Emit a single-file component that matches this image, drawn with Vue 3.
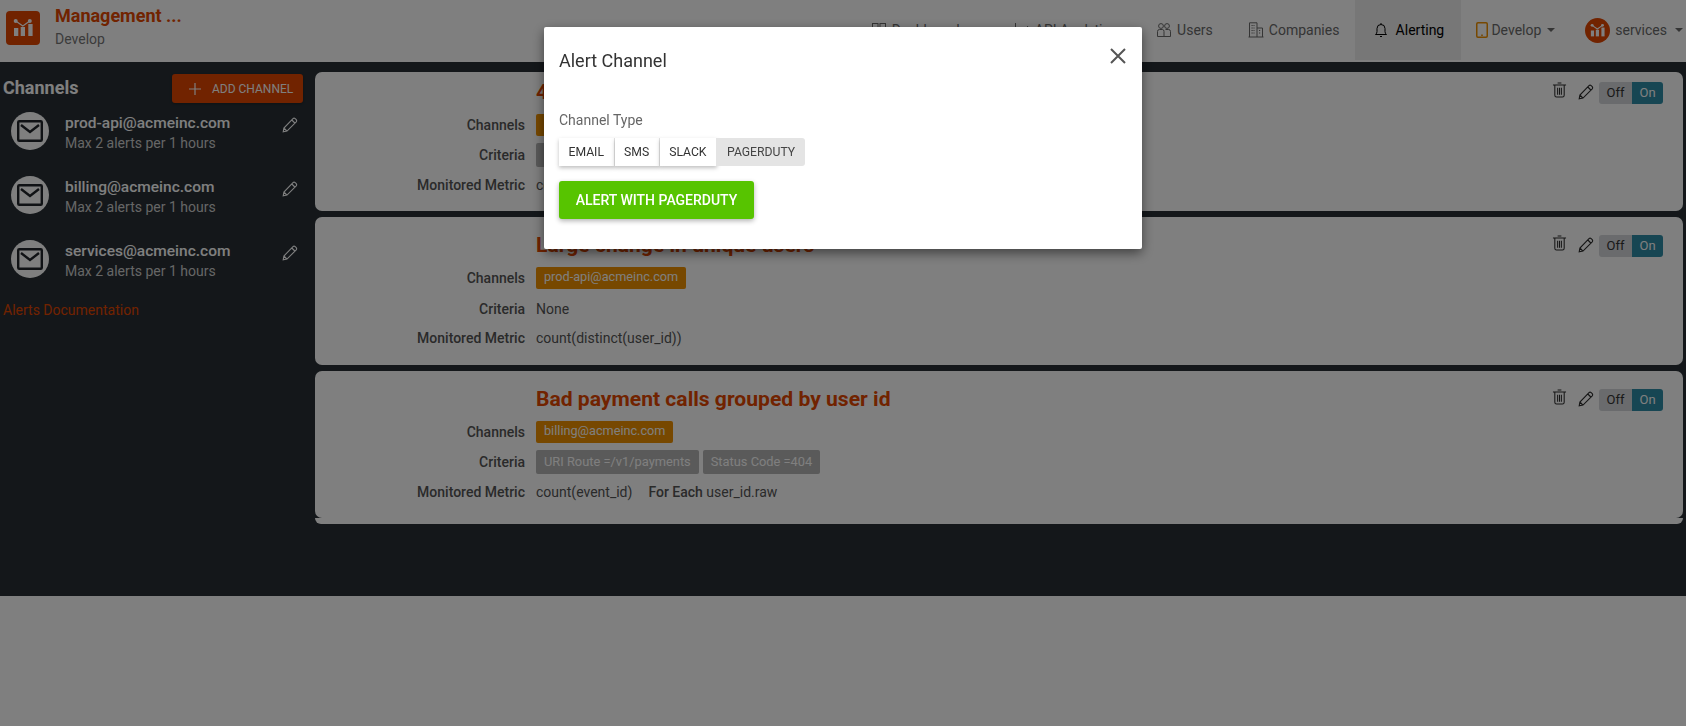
<template>
  <div class="page">
    <header class="topbar">
      <div class="brand">
        <div class="logo">
          <svg viewBox="0 0 34 34" width="34" height="34">
            <path d="M9.7 10 L16.8 15 L23.8 10" fill="none" stroke="#fff" stroke-width="1.2" />
            <circle cx="9.7" cy="10" r="2" fill="#fff" />
            <circle cx="23.8" cy="10" r="2" fill="#fff" />
            <rect x="8" y="17" width="4.3" height="8" fill="#fff" />
            <rect x="14.7" y="16" width="4.3" height="9" fill="#fff" />
            <rect x="22.3" y="13" width="4.3" height="12" fill="#fff" />
          </svg>
        </div>
        <div>
          <div class="brand-name">Management ...</div>
          <div class="brand-env">Develop</div>
        </div>
      </div>

      <nav class="nav">
        <a class="nav-item dash">
          <svg viewBox="0 0 16 16" width="16" height="16" fill="none" stroke="currentColor">
            <rect x="1.5" y="1.5" width="5.5" height="13" />
            <rect x="9" y="1.5" width="5.5" height="13" />
          </svg>
          Dashboards
        </a>
        <a class="nav-item api">
          <svg viewBox="0 0 16 16" width="16" height="16" fill="none" stroke="currentColor">
            <path d="M1.5 1v13.5H15M4 9l3 3 7-8" />
          </svg>
          API Analytics
        </a>
        <a class="nav-item users">
          <svg viewBox="0 0 16 16" width="16" height="16" fill="none" stroke="currentColor">
            <circle cx="5" cy="4" r="2.4" />
            <circle cx="11" cy="4" r="2.4" />
            <path d="M1.5 14.5V9.5q0-2 2-2h3q1.5 0 1.5 2v5zM8 14.5h6.5V9.5q0-2-2-2h-3" />
          </svg>
          Users
        </a>
        <a class="nav-item companies">
          <svg viewBox="0 0 16 16" width="16" height="16" fill="none" stroke="currentColor">
            <path d="M1.5 15V.8h7.5V15M9 6h5.5v9M.5 15h15" />
            <path d="M3.5 3.5h3M3.5 6h3M3.5 8.5h3M3.5 11h3M11 8.5h2M11 11h2" stroke-dasharray="1.2 .8" />
          </svg>
          Companies
        </a>
        <a class="nav-item active">
          <svg viewBox="0 0 16 16" width="16" height="16" fill="none" stroke="currentColor">
            <path d="M2.5 12.5q1.5-1 1.5-3V6.5a4 4 0 0 1 8 0v3q0 2 1.5 3z" />
            <path d="M8 1v1.5M7 14.5h2" />
          </svg>
          Alerting
        </a>
        <a class="nav-item develop">
          <svg class="tablet" viewBox="0 0 12 16" width="12" height="16" fill="none">
            <rect x=".75" y=".75" width="10.5" height="14.5" rx="1.2" stroke="#ee9000" stroke-width="1.5" />
            <rect x="5" y="12.6" width="2" height="1.2" fill="#ee9000" />
          </svg>
          Develop
          <span class="caret"></span>
        </a>
        <a class="nav-item account">
          <span class="avatar">
            <svg viewBox="0 0 34 34" width="25" height="25">
              <path d="M9.7 10 L16.8 15 L23.8 10" fill="none" stroke="#fff" stroke-width="1.4" />
              <circle cx="9.7" cy="10" r="2" fill="#fff" />
              <circle cx="23.8" cy="10" r="2" fill="#fff" />
              <rect x="8" y="17" width="4.3" height="8" fill="#fff" />
              <rect x="14.7" y="16" width="4.3" height="9" fill="#fff" />
              <rect x="22.3" y="13" width="4.3" height="12" fill="#fff" />
            </svg>
          </span>
          services
          <span class="caret"></span>
        </a>
      </nav>
    </header>

    <main class="main">
      <aside class="sidebar">
        <div class="side-head">
          <h2>Channels</h2>
          <button class="add-btn">
            <svg viewBox="0 0 14 14" width="14" height="14" stroke="#fff" stroke-width="1.2">
              <path d="M7 1v12M1 7h12" />
            </svg>
            Add Channel
          </button>
        </div>
        <div v-for="ch in channels" :key="ch" class="channel">
          <span class="env-circle">
            <svg viewBox="0 0 26 22" width="26" height="22" fill="none" stroke="#20252a" stroke-width="2.4">
              <rect x="1.2" y="1.2" width="23.6" height="19.6" rx="1" />
              <path d="M4 5l9 7 9-7" />
            </svg>
          </span>
          <div class="channel-text">
            <div class="channel-name">{{ ch }}</div>
            <div class="channel-sub">Max 2 alerts per 1 hours</div>
          </div>
          <svg class="edit" viewBox="0 0 16 16" width="16" height="16" fill="none" stroke="#fff" stroke-width="1.1">
            <path d="M1.2 14.8l.7-3.8L11 1.6q1-.9 2.2 0l1 1q.9 1.1 0 2.2L5 14.1zM1.9 11L5 14.1M9.8 3l3 3" />
          </svg>
        </div>
        <a class="docs">Alerts Documentation</a>
      </aside>

      <section class="alerts">
        <article v-for="a in alerts" :key="a.title" class="alert" :class="a.cls">
          <div class="alert-body">
            <div class="controls">
              <svg viewBox="0 0 16 17" width="15" height="16" fill="none" stroke="#2b2b2b" stroke-width="1.1">
                <path d="M1 3.2h14M6 1h4M3 3.2v11q0 1.8 1.8 1.8h6.4q1.8 0 1.8-1.8v-11M6 6v7.5M8 6v7.5M10 6v7.5" />
              </svg>
              <svg class="ctrl-pen" viewBox="0 0 16 16" width="16" height="16" fill="none" stroke="#2b2b2b" stroke-width="1.1">
                <path d="M1.2 14.8l.7-3.8L11 1.6q1-.9 2.2 0l1 1q.9 1.1 0 2.2L5 14.1zM1.9 11L5 14.1M9.8 3l3 3" />
              </svg>
              <div class="toggle">
                <span class="off">Off</span>
                <span class="on">On</span>
              </div>
            </div>
            <h3>{{ a.title }}</h3>
            <div class="row channels-row">
              <label>Channels</label>
              <div class="value"><span class="chip orange">{{ a.channel }}</span></div>
            </div>
            <div class="row" :class="{ none: !a.criteria.length }">
              <label>Criteria</label>
              <div class="value">
                <template v-if="a.criteria.length">
                  <span v-for="(c, i) in a.criteria" :key="i" class="chip grey">{{ c }}</span>
                </template>
                <template v-else>None</template>
              </div>
            </div>
            <div class="row metric-row">
              <label>Monitored Metric</label>
              <div class="value">
                {{ a.metric }}
                <span v-if="a.group" class="group"><b>For Each</b> {{ a.group }}</span>
              </div>
            </div>
          </div>
          <div v-if="a.cls === 'last'" class="alert-tail"></div>
        </article>
      </section>
    </main>

    <div class="overlay">
      <div class="modal">
        <div class="modal-head">
          <span>Alert Channel</span>
          <svg viewBox="0 0 16 16" width="16" height="16" stroke="#555" stroke-width="2">
            <path d="M1 1l14 14M15 1L1 15" />
          </svg>
        </div>
        <div class="type-label">Channel Type</div>
        <div class="type-group">
          <button v-for="t in types" :key="t" class="type-btn" :class="{ selected: t === selected }">{{ t }}</button>
        </div>
        <button class="submit">Alert with PagerDuty</button>
      </div>
    </div>
  </div>
</template>

<script setup>
const channels = ['prod-api@acmeinc.com', 'billing@acmeinc.com', 'services@acmeinc.com']
const types = ['Email', 'SMS', 'Slack', 'PagerDuty']
const selected = 'PagerDuty'

// the first card sits behind the modal, only its left edge shows
const alerts = [
  {
    title: '4xx errors',
    cls: 'first',
    channel: '',
    criteria: [''],
    metric: 'count(event_id)'
  },
  {
    title: 'Large change in unique users',
    cls: '',
    channel: 'prod-api@acmeinc.com',
    criteria: [],
    metric: 'count(distinct(user_id))'
  },
  {
    title: 'Bad payment calls grouped by user id',
    cls: 'last',
    channel: 'billing@acmeinc.com',
    criteria: ['URI Route =/v1/payments', 'Status Code =404'],
    metric: 'count(event_id)',
    group: 'user_id.raw'
  }
]
</script>

<style>
html,
body {
  margin: 0;
  background: #fff;
}
</style>

<style scoped>
.page {
  position: relative;
  height: 726px;
  overflow: hidden;
  font-family: Roboto, "Liberation Sans", sans-serif;
  font-size: 14px;
  color: #444;
  background: #fff;
}

.topbar {
  display: flex;
  align-items: flex-start;
  justify-content: space-between;
  height: 62px;
  background: #fff;
}

.brand {
  display: flex;
  padding: 5px 0 0 6px;
}

.logo {
  width: 34px;
  height: 34px;
  margin: 6px 15px 0 0;
  border-radius: 4px;
  background: #e24600;
}

.logo svg,
.avatar svg {
  display: block;
}

.brand-name {
  font-size: 18px;
  font-weight: 700;
  line-height: 22px;
  color: #e24600;
}

.brand-env {
  margin-top: 3px;
  font-size: 14px;
  line-height: 18px;
  color: #777;
}

.nav {
  display: flex;
  height: 60px;
  font-size: 14px;
}

.nav-item {
  display: flex;
  align-items: center;
  gap: 5px;
  color: #6a6a6a;
  white-space: nowrap;
}

.dash {
  margin-right: 47px;
}

.api {
  margin-right: 39px;
}

.users {
  margin-right: 35px;
}

.companies {
  margin-right: 16px;
}

.active {
  justify-content: center;
  gap: 7px;
  width: 106px;
  background: #eee;
  color: #000;
}

.develop {
  gap: 3px;
  margin: 0 30px 0 15px;
}

.account {
  margin-right: 3px;
}

.avatar {
  width: 25px;
  height: 25px;
  border-radius: 50%;
  background: #e24600;
}

.caret {
  width: 0;
  height: 0;
  margin-left: 3px;
  border-top: 4px solid #6a6a6a;
  border-left: 4px solid transparent;
  border-right: 4px solid transparent;
}

.main {
  display: flex;
  height: 534px;
  background: #282f35;
}

.sidebar {
  width: 315px;
  flex-shrink: 0;
  box-sizing: border-box;
  padding: 12px 17px 0 3px;
}

.side-head {
  display: flex;
  align-items: center;
  justify-content: space-between;
  height: 29px;
  margin-right: -5px;
  margin-bottom: 9px;
}

.side-head h2 {
  margin: -2px 0 0;
  font-size: 18px;
  font-weight: 700;
  color: #fff;
}

.add-btn {
  display: flex;
  align-items: center;
  gap: 10px;
  width: 131px;
  height: 29px;
  padding: 0 0 0 16px;
  border: 0;
  border-radius: 3px;
  background: #e24600;
  box-shadow: 0 1px 3px rgba(0, 0, 0, 0.3);
  font-family: inherit;
  font-size: 12px;
  text-transform: uppercase;
  color: #fff;
}

.channel {
  display: flex;
  height: 64px;
  padding-left: 8px;
}

.env-circle {
  display: flex;
  align-items: center;
  justify-content: center;
  width: 38px;
  height: 38px;
  margin-right: 16px;
  border-radius: 50%;
  background: #fff;
}

.channel-text {
  flex: 1;
}

.channel-name {
  font-size: 15.5px;
  font-weight: 500;
  line-height: 22px;
  color: #fff;
}

.channel-sub {
  font-size: 14px;
  line-height: 18px;
  color: #ccc;
}

.edit {
  margin-top: 5px;
}

.docs {
  display: block;
  margin-top: -3px;
  font-size: 14px;
  line-height: 18px;
  color: #e24600;
}

.alerts {
  flex: 1;
  padding: 10px 3px 0 0;
}

.alert {
  margin-bottom: 6px;
}

.alert-body {
  position: relative;
  padding: 17px 0 15px;
  border-radius: 7px;
  background: #fff;
}

.alert-tail {
  height: 6px;
  border-radius: 0 0 7px 7px;
  background: #fff;
}

.first .alert-body {
  padding-top: 9px;
  padding-bottom: 14px;
}

.last .alert-body {
  padding-bottom: 14px;
}

h3 {
  height: 24px;
  margin: 0 0 9px 221px;
  font-size: 21.1px;
  font-weight: 700;
  line-height: 22px;
  color: #e24600;
}

.controls {
  position: absolute;
  top: 18px;
  right: 20px;
  display: flex;
  align-items: flex-start;
}

.first .controls {
  top: 10px;
}

.ctrl-pen {
  margin: 2px 5px 0 11px;
}

.toggle {
  display: flex;
  height: 22px;
  border-radius: 3px;
  overflow: hidden;
  font-size: 13px;
  line-height: 22px;
}

.off {
  width: 33px;
  text-align: center;
  background: #d4d7da;
  color: #333;
}

.on {
  width: 31px;
  text-align: center;
  background: #2f8ca6;
  color: #fff;
}

.row {
  display: flex;
  gap: 11px;
  height: 24px;
  margin-bottom: 5px;
  line-height: 24px;
}

.channels-row label {
  line-height: 22px;
}

.none {
  line-height: 26px;
}

.metric-row {
  margin: 6px 0 0;
}

.row label {
  width: 210px;
  flex-shrink: 0;
  font-weight: 500;
  text-align: right;
  color: #555;
}

.value {
  display: flex;
  align-items: flex-start;
  gap: 4px;
  color: #555;
}

.chip {
  padding: 0 8px;
  border-radius: 2px;
  font-size: 12.7px;
}

.first .chip {
  width: 100px;
}

.orange {
  height: 22px;
  line-height: 20px;
  background: #ee9000;
  color: #fff;
}

.grey {
  height: 24px;
  background: #b4b4b4;
  font-size: 12.85px;
  color: #fff;
}

.group {
  margin-left: 12px;
}

.group b {
  font-weight: 500;
}

.overlay {
  position: fixed;
  inset: 0;
  display: flex;
  justify-content: center;
  align-items: flex-start;
  background: rgba(0, 0, 0, 0.5);
}

.modal {
  width: 598px;
  height: 222px;
  margin-top: 27px;
  box-sizing: border-box;
  padding: 0 16px 0 15px;
  border-radius: 2px;
  background: #fff;
  box-shadow: 0 4px 12px rgba(0, 0, 0, 0.5);
}

.modal-head {
  display: flex;
  align-items: center;
  justify-content: space-between;
  height: 66px;
  font-size: 18px;
  color: #333;
}

.modal-head svg {
  margin-top: -8px;
}

.type-label {
  margin-top: 18px;
  font-size: 14px;
  line-height: 18px;
  color: #666;
}

.type-group {
  display: flex;
  margin-top: 9px;
}

.type-btn {
  height: 28px;
  padding: 0 9.5px;
  border: 0;
  border-right: 1px solid #e4e4e4;
  background: #fff;
  box-shadow: 0 2px 4px rgba(0, 0, 0, 0.25);
  font-family: inherit;
  font-size: 12.2px;
  text-transform: uppercase;
  color: #333;
}

.type-btn.selected {
  padding: 0 10px;
  border-right: 0;
  border-radius: 0 3px 3px 0;
  background: #e4e4e4;
  box-shadow: none;
  color: #444;
}

.submit {
  display: block;
  width: 195px;
  height: 38px;
  margin-top: 15px;
  border: 0;
  border-radius: 3px;
  background: #57c400;
  box-shadow: 0 2px 5px rgba(0, 0, 0, 0.3);
  font-family: inherit;
  font-size: 14px;
  font-weight: 500;
  text-transform: uppercase;
  color: #fff;
}
</style>
